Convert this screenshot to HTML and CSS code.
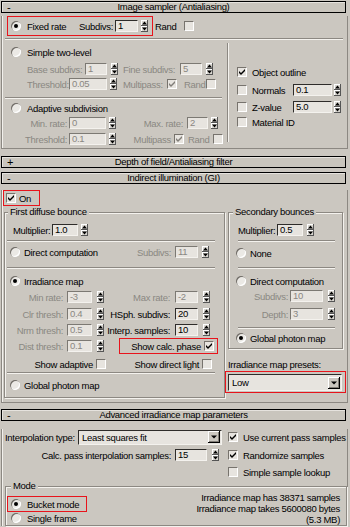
FILE: index.html
```html
<!DOCTYPE html>
<html lang="en">
<head>
    <meta charset="UTF-8">
    <title>V-Ray rollouts</title>
    <link rel="stylesheet" href="styles.css">
</head>
<body>
<div class="panel">

    <div class="rhead"><span class="pm">-</span><span class="rtitle">Image sampler (Antialiasing)</span></div>
    <div class="roll is-roll">
        <div class="row h20 mt3">
            <div class="red fixbox">
                <span class="radio on"></span>
                <span class="t ml6 w52">Fixed rate</span>
                <span class="t w36">Subdivs:</span>
                <span class="num w23">1</span>
                <span class="spin ml3"></span>
            </div>
            <span class="t ml2 w29">Rand</span>
            <span class="cb"></span>
        </div>
        <div class="sep is-sep"></div>
        <div class="cols">
            <div class="is-left">
                <div class="row mt5"><span class="radio"></span><span class="t ml6">Simple two-level</span></div>
                <div class="row mt3 dis">
                    <span class="t ml16 w58">Base subdivs:</span><span class="num w22">1</span><span class="spin ml4"></span>
                    <span class="t ml5 w57">Fine subdivs:</span><span class="num w22">5</span><span class="spin ml4"></span>
                </div>
                <div class="row mt1 dis">
                    <span class="t ml16 w42">Threshold:</span><span class="num w38">0.05</span><span class="spin ml3"></span>
                    <span class="t ml6 w44">Multipass:</span><span class="cb on"></span>
                    <span class="t ml7 w22">Rand</span><span class="cb"></span>
                </div>
                <div class="sep left-sep"></div>
                <div class="row mt2"><span class="radio"></span><span class="t ml6">Adaptive subdivision</span></div>
                <div class="row mt1 dis">
                    <span class="t w56 r">Min. rate:</span><span class="num ml2 w37">0</span><span class="spin ml3"></span>
                    <span class="t w67 r">Max. rate:</span><span class="num ml4 w21">2</span><span class="spin ml3"></span>
                </div>
                <div class="row mt2 dis">
                    <span class="t w56 r">Threshold:</span><span class="num ml2 w37">0.1</span><span class="spin ml3"></span>
                    <span class="t w55 r">Multipass</span><span class="cb on ml3"></span>
                    <span class="t ml4 w25">Rand</span><span class="cb"></span>
                </div>
            </div>
            <div class="vsep"></div>
            <div class="is-right">
                <div class="row mt25"><span class="cb on"></span><span class="t ml5">Object outline</span></div>
                <div class="row mt4"><span class="cb"></span><span class="t ml5 w41">Normals</span><span class="num w39">0.1</span><span class="spin ml2"></span></div>
                <div class="row mt3"><span class="cb"></span><span class="t ml5 w41">Z-value</span><span class="num w39">5.0</span><span class="spin ml2"></span></div>
                <div class="row mt1"><span class="cb"></span><span class="t ml5">Material ID</span></div>
            </div>
        </div>
    </div>

    <div class="rhead mt7"><span class="pm">+</span><span class="rtitle">Depth of field/Antialiasing filter</span></div>

    <div class="rhead mt4"><span class="pm">-</span><span class="rtitle">Indirect illumination (GI)</span></div>
    <div class="roll gi-roll">
        <div class="red onbox"><span class="cb on"></span><span class="t ml3">On</span></div>
        <div class="gi-cols">
            <fieldset class="grp fdb">
                <legend>First diffuse bounce</legend>
                <div class="row mt5"><span class="t ml8 w39">Multiplier:</span><span class="num w26">1.0</span><span class="spin ml3"></span></div>
                <div class="sep fdb-sep mt3"></div>
                <div class="row mt3">
                    <span class="radio ml5"></span><span class="t ml4 w80">Direct computation</span>
                    <span class="t w67 r dis">Subdivs:</span><span class="num dis ml4 w23">11</span><span class="spin ml4"></span>
                </div>
                <div class="sep fdb-sep mt8"></div>
                <div class="row mt5"><span class="radio on ml5"></span><span class="t ml4">Irradiance map</span></div>
                <div class="row mt2">
                    <span class="t w58 r dis">Min rate:</span><span class="num dis ml4 w25">-3</span><span class="spin ml5"></span>
                    <span class="t w66 r dis">Max rate:</span><span class="num dis ml5 w23">-2</span><span class="spin ml5"></span>
                </div>
                <div class="row mt3">
                    <span class="t w58 r dis">Clr thresh:</span><span class="num dis ml4 w25">0.4</span><span class="spin ml5"></span>
                    <span class="t w66 r">HSph. subdivs:</span><span class="num ml5 w23">20</span><span class="spin ml5"></span>
                </div>
                <div class="row mt2">
                    <span class="t w58 r dis">Nrm thresh:</span><span class="num dis ml4 w25">0.5</span><span class="spin ml5"></span>
                    <span class="t w66 r">Interp. samples:</span><span class="num ml5 w23">10</span><span class="spin ml5"></span>
                </div>
                <div class="row h16 mt1">
                    <span class="t w58 r dis">Dist thresh:</span><span class="num dis ml4 w25">0.1</span><span class="spin ml5"></span>
                    <div class="red calcbox"><span class="t w81 r">Show calc. phase</span><span class="cb on ml3"></span></div>
                </div>
                <div class="row mt3">
                    <span class="t w88 r">Show adaptive</span><span class="cb ml3"></span>
                    <span class="t w93 r">Show direct light</span><span class="cb ml3"></span>
                </div>
                <div class="sep fdb-sep mt1"></div>
                <div class="row mt4"><span class="radio ml5"></span><span class="t ml4">Global photon map</span></div>
            </fieldset>
            <div class="gi-right">
                <fieldset class="grp sec">
                    <legend>Secondary bounces</legend>
                    <div class="row mt5"><span class="t ml9 w39">Multiplier:</span><span class="num w26">0.5</span><span class="spin ml4"></span></div>
                    <div class="sep sec-sep mt3"></div>
                    <div class="row mt4"><span class="radio ml7"></span><span class="t ml4">None</span></div>
                    <div class="sep sec-sep mt7"></div>
                    <div class="row mt5"><span class="radio ml7"></span><span class="t ml4">Direct computation</span></div>
                    <div class="row mt1 dis"><span class="t w59 r">Subdivs:</span><span class="num ml2 w33">10</span><span class="spin ml5"></span></div>
                    <div class="row mt4 dis"><span class="t w59 r">Depth:</span><span class="num ml2 w33">3</span><span class="spin ml5"></span></div>
                    <div class="sep sec-sep mt6"></div>
                    <div class="row mt2"><span class="radio on ml7"></span><span class="t ml4">Global photon map</span></div>
                </fieldset>
                <div class="row mt8"><span class="t">Irradiance map presets:</span></div>
                <div class="red presetbox"><div class="drop"><span class="t">Low</span></div></div>
            </div>
        </div>
    </div>

    <div class="rhead mt6"><span class="pm">-</span><span class="rtitle">Advanced irradiance map parameters</span></div>
    <div class="roll adv-roll">
        <div class="row h16 mt8">
            <span class="t ml3 w73">Interpolation type:</span>
            <div class="drop w144"><span class="t">Least squares fit</span></div>
            <span class="cb on ml6"></span><span class="t ml5">Use current pass samples</span>
        </div>
        <div class="row mt3">
            <span class="t ml3 w166 r">Calc. pass interpolation samples:</span><span class="num ml4 w32">15</span><span class="spin ml5"></span>
            <span class="cb on ml9"></span><span class="t ml5">Randomize samples</span>
        </div>
        <div class="row mt3"><span class="cb ml226"></span><span class="t ml5">Simple sample lookup</span></div>
        <fieldset class="grp mode">
            <legend>Mode</legend>
            <div class="mode-in">
                <div class="mode-l">
                    <div class="red bucketbox"><span class="radio on"></span><span class="t ml6">Bucket mode</span></div>
                    <div class="row single"><span class="radio ml5"></span><span class="t ml6">Single frame</span></div>
                </div>
                <div class="mode-r">Irradiance map has 38371 samples<br>Irradiance map takes 5600080 bytes<br>(5.3 MB)</div>
            </div>
        </fieldset>
    </div>

</div>
</body>
</html>
```
FILE: styles.css
```css
* {
    box-sizing: border-box;
}

body {
    margin: 0;
    background: #cbc7c0;
    font-family: "Liberation Sans", Arial, sans-serif;
    font-size: 9.5px;
    letter-spacing: -0.3px;
    color: #000;
    overflow: hidden;
}

.panel {
    width: 350px;
    height: 527px;
    overflow: hidden;
}

/* rollout headers */
.rhead {
    display: flex;
    align-items: center;
    height: 12px;
    margin: 1px 4px 0 1px;
    border: 1px solid #000;
    background: #c9c5bd;
    box-shadow: inset 1px 1px 0 #e6e3de;
    line-height: 10px;
}

.pm {
    width: 16px;
    padding-left: 5px;
    font-size: 11px;
}

.rtitle {
    flex: 1;
    text-align: center;
    padding-right: 16px;
}

.roll {
    margin: 0 2px 0 1px;
    border: 1px solid #8c8882;
    border-top: 0;
    box-shadow: inset 1px 0 0 #f2f0ec;
}

.is-roll {
    padding-bottom: 2px;
}

.gi-roll {
    padding-bottom: 4px;
}

.adv-roll {
    border-bottom: 0;
}

/* generic rows */
.row {
    display: flex;
    align-items: center;
    height: 14px;
    white-space: nowrap;
}

.h16 {
    height: 16px;
}

.h20 {
    height: 20px;
}

.t {
    flex-shrink: 0;
    white-space: nowrap;
}

.r {
    text-align: right;
}

.dis, .dis .t, .t.dis {
    color: #8a8782;
}

.red {
    border: 1px solid #e8141c;
}

.sep {
    height: 2px;
    border-top: 1px solid #8c8882;
    border-bottom: 1px solid #f4f2ee;
}

.vsep {
    margin: 3px 0 0 3px;
    width: 2px;
    height: 99px;
    border-left: 1px solid #8c8882;
    border-right: 1px solid #f4f2ee;
}

/* controls */
.num {
    flex-shrink: 0;
    height: 12px;
    border: 1px solid;
    border-color: #2e2c2a #f4f2ee #f4f2ee #2e2c2a;
    background: #e7e4df;
    padding-left: 2px;
    line-height: 10px;
    overflow: hidden;
}

.num.dis, .dis .num {
    border-color: #7c7973 #f4f2ee #f4f2ee #7c7973;
}

.spin {
    flex-shrink: 0;
    width: 7px;
    height: 12px;
    background: url("data:image/svg+xml,<svg xmlns='http://www.w3.org/2000/svg' width='7' height='12'><rect width='7' height='12' fill='%23d8d5cf'/><path d='M0 .5h7M.5 0v12M0 6.5h7' stroke='%23fff'/><path d='M0 11.5h7M6.5 0v12M0 5.5h7' stroke='%23555'/><path d='M3.5 1.5L6 4.5H1zM1 7.5h5l-2.5 3z' fill='%23000'/></svg>") no-repeat;
}

.cb {
    flex-shrink: 0;
    width: 10px;
    height: 10px;
    border: 1px solid;
    border-color: #77736d #fff #fff #77736d;
    background: #e7e4df;
}

.cb.on {
    background: #e7e4df url("data:image/svg+xml,<svg xmlns='http://www.w3.org/2000/svg' width='8' height='8'><path d='M1 3l2 2 4-4v2L3 7 1 5z' fill='%23000'/></svg>") center no-repeat;
}

.dis .cb.on {
    background-image: url("data:image/svg+xml,<svg xmlns='http://www.w3.org/2000/svg' width='8' height='8'><path d='M1 3l2 2 4-4v2L3 7 1 5z' fill='%23807d78'/></svg>");
}

.radio {
    flex-shrink: 0;
    position: relative;
    width: 10px;
    height: 10px;
    border-radius: 50%;
    background: #ebe9e5;
    box-shadow: inset 1px 1px 0 #6f6b65, inset -1px -1px 0 #fff;
}

.radio.on::after {
    content: "";
    position: absolute;
    left: 3px;
    top: 3px;
    width: 4px;
    height: 4px;
    border-radius: 50%;
    background: #000;
}

.drop {
    flex-shrink: 0;
    display: flex;
    align-items: center;
    height: 17px;
    padding-left: 3px;
    border: 1px solid;
    border-color: #2e2c2a #f4f2ee #f4f2ee #2e2c2a;
    background: #e7e4df url("data:image/svg+xml,<svg xmlns='http://www.w3.org/2000/svg' width='12' height='12'><rect width='12' height='12' fill='%23cbc7c0'/><path d='M0 .5h11.5M.5 0v11.5' stroke='%23fff'/><path d='M0 11.5h12M11.5 0v12' stroke='%23000'/><path d='M1 10.5h10M10.5 1v10' stroke='%23807c76'/><path d='M3 4.5h6l-3 3z' fill='%23000'/></svg>") right 1px center no-repeat;
}

.adv-roll .drop {
    height: 15px;
}

/* group boxes */
.grp {
    margin: 0;
    padding: 0;
    min-width: 0;
    border: 1px solid #8c8882;
    box-shadow: 1px 1px 0 #f4f2ee, inset 1px 1px 0 #f4f2ee;
}

.grp legend {
    padding: 0 2px;
    line-height: 12px;
    background: #cbc7c0;
}

/* image sampler */
.fixbox {
    display: flex;
    align-items: center;
    height: 20px;
    margin-left: 5px;
    padding: 0 4px 0 3px;
}

.is-sep {
    margin: 2px 4px 0 3px;
}

.cols {
    display: flex;
}

.is-left {
    width: 222px;
    padding-left: 9px;
}

.left-sep {
    margin: 6px 0 0 -6px;
    width: 217px;
}

.is-right {
    flex: 1;
    padding-left: 8px;
}

/* GI */
.onbox {
    display: flex;
    align-items: center;
    width: 37px;
    height: 16px;
    margin: 6px 0 0 1px;
    padding-left: 2px;
}

.gi-cols {
    display: flex;
    align-items: flex-start;
}

.fdb {
    width: 221px;
    margin-left: 2px;
    padding-bottom: 5px;
}

.fdb legend {
    margin-left: 3px;
}

.fdb-sep {
    margin-left: 2px;
    width: 208px;
}

.calcbox {
    display: flex;
    align-items: center;
    height: 16px;
    margin-left: 15px;
    padding-right: 3px;
}

.gi-right {
    width: 118px;
    margin-left: 3px;
}

.sec {
    width: 115px;
    padding-bottom: 3px;
}

.sec legend {
    margin-left: 4px;
}

.sec-sep {
    margin-left: 9px;
    width: 97px;
}

.presetbox {
    width: 121px;
    margin-left: -3px;
    padding: 2px 3px 1px 2px;
}

/* advanced */
.mode {
    margin: 1px 0 0 3px;
}

.mode legend {
    margin-left: 5px;
}

.mode-in {
    display: flex;
}

.mode-l {
    width: 120px;
}

.bucketbox {
    display: flex;
    align-items: center;
    width: 80px;
    height: 16px;
    margin: 4px 0 0 1px;
    padding-left: 3px;
}

.single {
    margin-top: -1px;
}

.mode-r {
    flex: 1;
    text-align: right;
    line-height: 11px;
    padding-right: 6px;
}

/* spacing helpers */
.mt1 { margin-top: 1px; }
.mt2 { margin-top: 2px; }
.mt3 { margin-top: 3px; }
.mt4 { margin-top: 4px; }
.mt5 { margin-top: 5px; }
.mt6 { margin-top: 6px; }
.mt7 { margin-top: 7px; }
.mt8 { margin-top: 8px; }
.mt25 { margin-top: 25px; }

.ml2 { margin-left: 2px; }
.ml3 { margin-left: 3px; }
.ml4 { margin-left: 4px; }
.ml5 { margin-left: 5px; }
.ml6 { margin-left: 6px; }
.ml7 { margin-left: 7px; }
.ml8 { margin-left: 8px; }
.ml9 { margin-left: 9px; }
.ml16 { margin-left: 16px; }
.ml226 { margin-left: 226px; }

.w21 { width: 21px; }
.w22 { width: 22px; }
.w23 { width: 23px; }
.w25 { width: 25px; }
.w26 { width: 26px; }
.w29 { width: 29px; }
.w32 { width: 32px; }
.w33 { width: 33px; }
.w36 { width: 36px; }
.w37 { width: 37px; }
.w38 { width: 38px; }
.w39 { width: 39px; }
.w41 { width: 41px; }
.w42 { width: 42px; }
.w44 { width: 44px; }
.w52 { width: 52px; }
.w55 { width: 55px; }
.w56 { width: 56px; }
.w57 { width: 57px; }
.w58 { width: 58px; }
.w59 { width: 59px; }
.w66 { width: 66px; }
.w67 { width: 67px; }
.w73 { width: 73px; }
.w80 { width: 80px; }
.w81 { width: 81px; }
.w88 { width: 88px; }
.w93 { width: 93px; }
.w144 { width: 144px; }
.w166 { width: 166px; }
```
